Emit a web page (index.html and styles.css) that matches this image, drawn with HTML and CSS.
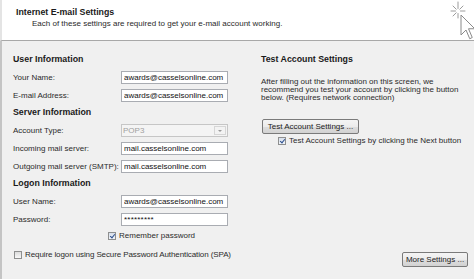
FILE: index.html
```html
<!DOCTYPE html>
<html>
<head>
    <title>Add New Account</title>
    <link rel="stylesheet" href="styles.css">
</head>
<body>
    <div class="header">
        <div class="header-text">
            <div class="title">Internet E-mail Settings</div>
            <div class="subtitle">Each of these settings are required to get your e-mail account working.</div>
        </div>
        <svg class="cursor-icon" width="24" height="40" viewBox="0 0 24 40">
            <g stroke="#9c9c9c" stroke-width="1" stroke-linecap="round">
                <line x1="8" y1="2" x2="8" y2="8.5"/>
                <line x1="8" y1="13.5" x2="8" y2="18"/>
                <line x1="1" y1="11" x2="5.5" y2="11"/>
                <line x1="10.5" y1="11" x2="15" y2="11"/>
                <line x1="3" y1="6" x2="6.2" y2="9.2"/>
                <line x1="13" y1="6" x2="9.8" y2="9.2"/>
                <line x1="3" y1="16" x2="6.2" y2="12.8"/>
            </g>
            <polygon points="11,15 11,35 16,30 19.75,38.75 22.25,37.5 18.5,28.75 24.75,28.75" fill="#fff" stroke="#8a8a8a" stroke-width="1" stroke-linejoin="round"/>
        </svg>
    </div>

    <div class="content">
        <div class="left-col">
            <div class="section">
                <h3>User Information</h3>
                <div class="row">
                    <label>Your Name:</label>
                    <input type="text" value="awards@casselsonline.com">
                </div>
                <div class="row">
                    <label>E-mail Address:</label>
                    <input type="text" value="awards@casselsonline.com">
                </div>
            </div>

            <div class="section">
                <h3>Server Information</h3>
                <div class="row">
                    <label>Account Type:</label>
                    <div class="select-box">
                        <select disabled>
                            <option>POP3</option>
                        </select>
                        <span class="drop"></span>
                    </div>
                </div>
                <div class="row">
                    <label>Incoming mail server:</label>
                    <input type="text" value="mail.casselsonline.com">
                </div>
                <div class="row">
                    <label>Outgoing mail server (SMTP):</label>
                    <input type="text" value="mail.casselsonline.com">
                </div>
            </div>

            <div class="section">
                <h3>Logon Information</h3>
                <div class="row">
                    <label>User Name:</label>
                    <input type="text" value="awards@casselsonline.com">
                </div>
                <div class="row">
                    <label>Password:</label>
                    <input type="text" class="password" value="*********">
                </div>
            </div>

            <label class="check remember"><span class="box checked"></span>Remember password</label>
            <label class="check spa"><span class="box"></span>Require logon using Secure Password Authentication (SPA)</label>
        </div>

        <div class="right-col">
            <h3>Test Account Settings</h3>
            <p>After filling out the information on this screen, we<br>recommend you test your account by clicking the button<br>below. (Requires network connection)</p>
            <button class="test-btn">Test Account Settings ...</button>
            <label class="check test-check"><span class="box checked"></span>Test Account Settings by clicking the Next button</label>
            <button class="more-btn">More Settings ...</button>
        </div>
    </div>
</body>
</html>
```

FILE: styles.css
```css
html, body {
    height: 100%;
}

body {
    margin: 0;
    font-family: "Liberation Sans", Arial, sans-serif;
    font-size: 8px;
    color: #222;
    background: #f0f0f0;
    display: flex;
    flex-direction: column;
}

.header {
    height: 40px;
    background: #fff;
    border-bottom: 1px solid #a8a8a8;
    border-left: 2px solid #e4e4e4;
    display: flex;
    justify-content: space-between;
    flex-shrink: 0;
}

.header-text {
    padding: 6px 0 0 14px;
}

.title {
    font-weight: bold;
    font-size: 8.8px;
    line-height: 12px;
    color: #1a1a1a;
}

.subtitle {
    padding-left: 16px;
    line-height: 12px;
    color: #2a2a2a;
}

.cursor-icon {
    display: block;
}

.content {
    flex: 1;
    border-left: 2px solid #c4c4c4;
    display: grid;
    grid-template-columns: 215px 1fr;
    column-gap: 33px;
    padding: 12px 6px 12px 11px;
}

h3 {
    margin: 0 0 6px;
    font-size: 8.8px;
    line-height: 12px;
    color: #1a1a1a;
}

.section + .section {
    margin-top: 4px;
}

.row {
    display: grid;
    grid-template-columns: 108px 107px;
    align-items: center;
    height: 13px;
}

.row + .row {
    margin-top: 5px;
}

label {
    color: #2b2b2b;
    white-space: nowrap;
}

input {
    box-sizing: border-box;
    height: 13px;
    width: 107px;
    margin: 0;
    padding: 0 2px;
    border: 1px solid #a9acb2;
    background: #fff;
    font-family: "Liberation Sans", Arial, sans-serif;
    font-size: 8px;
    color: #111;
    outline: none;
}

.password {
    letter-spacing: 0.2px;
}

.select-box {
    box-sizing: border-box;
    height: 13px;
    width: 107px;
    display: flex;
    align-items: stretch;
    border: 1px solid #c6c6c6;
    background: #f4f4f4;
}

.select-box select {
    flex: 1;
    appearance: none;
    -webkit-appearance: none;
    border: none;
    background: transparent;
    margin: 0;
    padding: 0 1px;
    font-family: "Liberation Sans", Arial, sans-serif;
    font-size: 8px;
    color: #a0a0a0;
    opacity: 1;
}

.drop {
    width: 10px;
    margin: 1px 1px 1px 0;
    border: 1px solid #d6d6d6;
    background: #f3f3f3;
    display: flex;
    align-items: center;
    justify-content: center;
}

.drop::after {
    content: "";
    border-left: 2px solid transparent;
    border-right: 2px solid transparent;
    border-top: 2px solid #9a9a9a;
}

.check {
    display: flex;
    align-items: center;
    gap: 3px;
    line-height: 10px;
}

.box {
    position: relative;
    flex-shrink: 0;
    box-sizing: border-box;
    width: 8px;
    height: 8px;
    border: 1px solid #8e8f8f;
    background: linear-gradient(#dcdcdc, #f8f8f8);
}

.box.checked {
    background: linear-gradient(#d6deea, #f2f5fa);
}

.box.checked::after {
    content: "";
    position: absolute;
    left: 1.5px;
    top: 0;
    width: 2px;
    height: 4px;
    border-right: 1.5px solid #2d4f8e;
    border-bottom: 1.5px solid #2d4f8e;
    transform: rotate(40deg);
}

.remember {
    margin: 5px 0 0 95px;
}

.spa {
    margin: 9px 0 0 1px;
    letter-spacing: -0.1px;
}

.right-col {
    display: flex;
    flex-direction: column;
    align-items: flex-start;
}

.right-col p {
    margin: 7px 0 0;
    line-height: 8px;
    color: #2b2b2b;
}

button {
    box-sizing: border-box;
    height: 15px;
    padding: 0;
    border: 1px solid #7a7a7a;
    border-radius: 2px;
    background: linear-gradient(#f4f4f4 0%, #ececec 50%, #dedede 51%, #d2d2d2 100%);
    font-family: "Liberation Sans", Arial, sans-serif;
    font-size: 8px;
    color: #1a1a1a;
}

.test-btn {
    width: 97px;
    margin: 17px 0 0 1px;
}

.test-check {
    margin: 2px 0 0 17px;
}

.more-btn {
    width: 66px;
    margin-top: auto;
    align-self: flex-end;
}
```
